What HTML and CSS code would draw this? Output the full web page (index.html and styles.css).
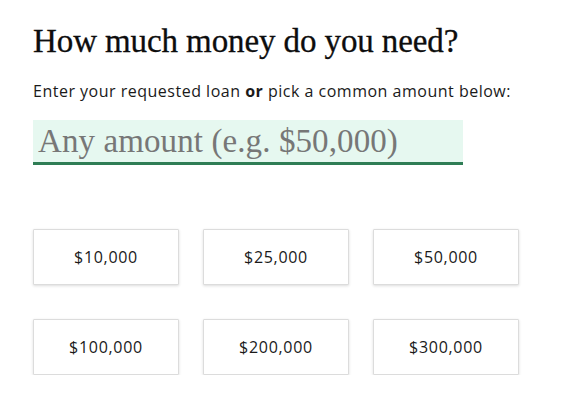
FILE: index.html
```html
<!DOCTYPE html>
<html>
<head>
<meta charset="utf-8">
<link rel="stylesheet" href="styles.css">
</head>
<body>
<main class="page">
  <h1 class="title">How much money do you need?</h1>
  <p class="lead">Enter your requested loan <b>or</b> pick a common amount below:</p>
  <div class="field"><input class="amount" type="text" placeholder="Any amount (e.g. $50,000)"></div>
  <div class="choices">
    <button class="choice">$10,000</button>
    <button class="choice">$25,000</button>
    <button class="choice">$50,000</button>
    <button class="choice">$100,000</button>
    <button class="choice">$200,000</button>
    <button class="choice">$300,000</button>
  </div>
</main>
</body>
</html>
```

FILE: styles.css
```css
html, body { margin: 0; padding: 0; background: #fff; }
.page { padding: 21px 0 0 33px; width: 520px; }
.title {
  margin: 0;
  font-family: "Liberation Serif", serif;
  font-weight: normal;
  font-size: 33px;
  line-height: 40px;
  color: #0d0d0d;
  letter-spacing: -0.1px;
  -webkit-text-stroke: 0.3px #0d0d0d;
}
.lead {
  margin: 20px 0 0;
  font-family: "Open Sans", "Liberation Sans", sans-serif;
  font-size: 16px;
  line-height: 20px;
  letter-spacing: 0.5px;
  color: #1a1a1a;
  white-space: nowrap;
}
.lead b { font-weight: 700; }
.field { margin-top: 19px; width: 430px; }
.amount {
  display: block;
  box-sizing: border-box;
  width: 100%;
  height: 45px;
  margin: 0;
  padding: 0 0 0 5px;
  border: 0;
  border-bottom: 3px solid #2f7d55;
  background: #e6f8f0;
  font-family: "Liberation Serif", serif;
  font-size: 33px;
  letter-spacing: 0.1px;
  color: #777;
  outline: none;
}
.amount::placeholder { color: #777; opacity: 1; }
.choices {
  display: grid;
  grid-template-columns: repeat(3, 146px);
  column-gap: 24px;
  row-gap: 34px;
  margin-top: 64px;
}
.choice {
  height: 56px;
  margin: 0;
  padding: 0;
  background: #fff;
  border: 1px solid #dcdcdc;
  border-radius: 1px;
  box-shadow: 0 1px 3px rgba(0, 0, 0, 0.14);
  font-family: "Open Sans", "Liberation Sans", sans-serif;
  font-size: 16px;
  letter-spacing: 0.7px;
  color: #1a1a1a;
}
```
